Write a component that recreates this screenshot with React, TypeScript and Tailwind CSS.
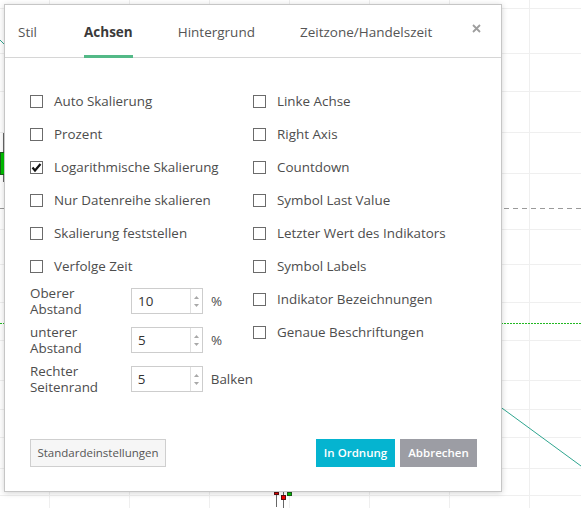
import React from "react";

const LEFT_OPTIONS = [
  { label: "Auto Skalierung", checked: false },
  { label: "Prozent", checked: false },
  { label: "Logarithmische Skalierung", checked: true },
  { label: "Nur Datenreihe skalieren", checked: false },
  { label: "Skalierung feststellen", checked: false },
  { label: "Verfolge Zeit", checked: false },
];

const RIGHT_OPTIONS = [
  "Linke Achse",
  "Right Axis",
  "Countdown",
  "Symbol Last Value",
  "Letzter Wert des Indikators",
  "Symbol Labels",
  "Indikator Bezeichnungen",
  "Genaue Beschriftungen",
];

const SPINNERS = [
  { label: "Oberer\nAbstand", value: "10", unit: "%" },
  { label: "unterer\nAbstand", value: "5", unit: "%" },
  { label: "Rechter\nSeitenrand", value: "5", unit: "Balken" },
];

const TABS = ["Stil", "Achsen", "Hintergrund", "Zeitzone/Handelszeit"];

const V_GRID = [49.5, 129.5, 209.5, 289.5, 369.5, 449.5, 529.5];
const H_GRID = [8.5, 53.5, 91.5, 132.5, 173.5, 229.5, 264.5, 302.5, 340.5, 380.5, 409.5, 437.5, 468.5, 495.5];

// chart that sits behind the modal
function ChartBackdrop() {
  return (
    <svg width="581" height="508" className="block">
      <rect width="581" height="508" fill="#ffffff" />
      {V_GRID.map((x) => (
        <line key={"v" + x} x1={x} y1={0} x2={x} y2={508} stroke="#efefef" />
      ))}
      {H_GRID.map((y) => (
        <line key={"h" + y} x1={0} y1={y} x2={581} y2={y} stroke="#efefef" />
      ))}
      <line x1={0} y1={208.5} x2={581} y2={208.5} stroke="#9a9a9a" strokeDasharray="5 4" />
      <line x1={0} y1={323.5} x2={581} y2={323.5} stroke="#22b822" strokeDasharray="2 1" />
      <line x1={0} y1={40} x2={6} y2={46} stroke="#2fa58f" />
      <line x1={495} y1={403} x2={581} y2={466} stroke="#2fa58f" />
      {/* left candle */}
      <line x1={3.5} y1={133} x2={3.5} y2={182} stroke="#666" />
      <rect x={0.5} y={152.5} width={4} height={22} fill="#00c000" stroke="#1a5e1a" />
      {/* candles at the bottom */}
      <line x1={276.5} y1={492} x2={276.5} y2={507} stroke="#666" />
      <rect x={274.5} y={492.5} width={4} height={2} fill="#ee0000" stroke="#5a1010" />
      <line x1={283.5} y1={492} x2={283.5} y2={508} stroke="#666" />
      <rect x={281.5} y={495.5} width={4} height={4} fill="#ee0000" stroke="#5a1010" />
      <rect x={287.5} y={492.5} width={4} height={3} fill="#00c800" stroke="#1a5e1a" />
    </svg>
  );
}

function Checkbox({ checked }: { checked: boolean }) {
  return (
    <span className="relative flex h-[13px] w-[13px] shrink-0 items-center justify-center border border-[#6b6b6b] bg-white">
      {checked && (
        <svg width="13" height="13" viewBox="0 0 13 13" className="absolute -left-px -top-px">
          <polyline points="2.5,6.5 5,9.5 10.5,3" fill="none" stroke="#111" strokeWidth="2.2" />
        </svg>
      )}
    </span>
  );
}

function OptionRow({ label, checked }: { label: string; checked: boolean }) {
  return (
    <div className="flex h-[33px] items-center gap-[11px]">
      <Checkbox checked={checked} />
      <span className="text-[13.4px] text-[#4d4d4d]">{label}</span>
    </div>
  );
}

function Spinner({ label, value, unit }: { label: string; value: string; unit: string }) {
  return (
    <div className="flex h-[32px] items-center">
      <div className="w-[101px] whitespace-pre-line text-[13.4px] leading-[16px] text-[#4d4d4d]">{label}</div>
      <div className="flex h-[26px] w-[72px] border border-[#cdcdcd] bg-white">
        <span className="flex flex-1 items-center pl-[6px] text-[13.4px] text-[#333]">{value}</span>
        <span className="flex w-[12px] flex-col items-center justify-center gap-[5px] border-l border-[#e0e0e0]">
          <svg width="5" height="3" viewBox="0 0 5 3">
            <polygon points="0,3 2.5,0 5,3" fill="#a8a8a8" />
          </svg>
          <svg width="5" height="3" viewBox="0 0 5 3">
            <polygon points="0,0 5,0 2.5,3" fill="#a8a8a8" />
          </svg>
        </span>
      </div>
      <span className="ml-[8px] text-[13.4px] text-[#4d4d4d]">{unit}</span>
    </div>
  );
}

export default function App() {
  return (
    <div className="relative h-[508px] w-[581px] overflow-hidden bg-white font-['Open_Sans',sans-serif]">
      <ChartBackdrop />

      <div className="absolute left-[4px] top-[4px] flex h-[488px] w-[498px] flex-col border border-[#c6c6c6] bg-white shadow-[0_1px_6px_rgba(0,0,0,0.18)]">
        {/* tabs */}
        <div className="flex h-[53px] shrink-0 border-b border-[#d6d6d6] pl-[13px]">
          <div className="flex gap-[45px]">
            {TABS.map((tab, i) => {
              const active = tab === "Achsen";
              return (
                <div key={tab} className={i === 1 ? "relative ml-[2px] flex items-center pt-[3px]" : "relative flex items-center pt-[3px]"}>
                  <span
                    className={
                      active
                        ? "text-[13.5px] font-bold text-[#3a3a3a]"
                        : "text-[13.5px] text-[#555]"
                    }
                  >
                    {tab}
                  </span>
                  {active && <span className="absolute -bottom-px left-0 right-0 h-[3px] bg-[#53b987]" />}
                </div>
              );
            })}
          </div>
          <button className="ml-auto mr-[20px] mt-[19px] self-start p-0">
            <svg width="9" height="9" viewBox="0 0 9 9">
              <path d="M1 1 L8 8 M8 1 L1 8" stroke="#9e9e9e" strokeWidth="1.8" />
            </svg>
          </button>
        </div>

        {/* option columns */}
        <div className="flex px-[25px] pt-[27px]">
          <div className="flex w-[223px] flex-col">
            {LEFT_OPTIONS.map((o) => (
              <OptionRow key={o.label} label={o.label} checked={o.checked} />
            ))}
            <div className="mt-[2px] flex flex-col gap-[7px]">
              {SPINNERS.map((s) => (
                <Spinner key={s.label} label={s.label} value={s.value} unit={s.unit} />
              ))}
            </div>
          </div>
          <div className="flex flex-col">
            {RIGHT_OPTIONS.map((label) => (
              <OptionRow key={label} label={label} checked={false} />
            ))}
          </div>
        </div>

        {/* footer */}
        <div className="mt-auto flex items-center pb-[24px] pl-[25px] pr-[24px]">
          <button className="h-[28px] w-[136px] border border-[#cfcfcf] bg-[#f6f6f6] text-[11.5px] font-medium text-[#555]">
            Standardeinstellungen
          </button>
          <div className="ml-auto flex gap-[5px]">
            <button className="h-[28px] w-[79px] bg-[#05b4d0] text-[11.5px] font-semibold text-white">In Ordnung</button>
            <button className="h-[28px] w-[77px] bg-[#9c9da4] text-[11.5px] font-semibold text-white">Abbrechen</button>
          </div>
        </div>
      </div>
    </div>
  );
}
